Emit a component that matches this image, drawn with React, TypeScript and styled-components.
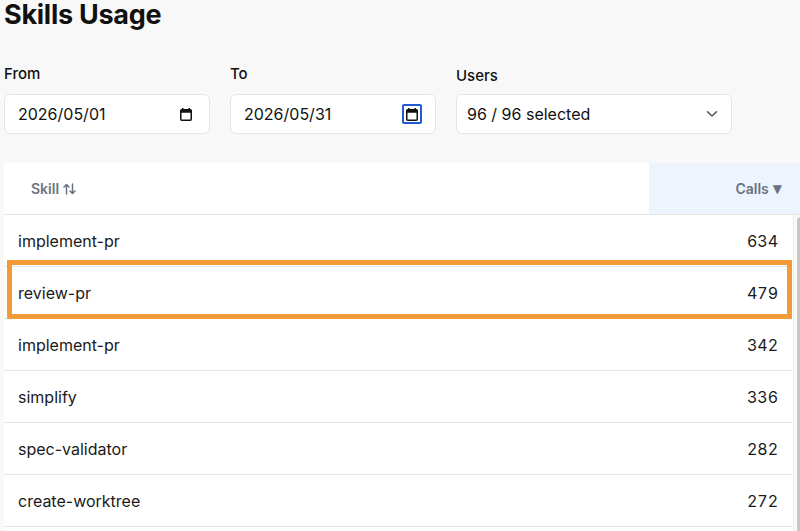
import React from "react";
import styled, { createGlobalStyle } from "styled-components";

const GlobalStyle = createGlobalStyle`
  html, body {
    margin: 0;
    padding: 0;
    background: #f8f8f8;
    overflow: hidden;
  }
  body {
    font-family: Inter, "Noto Sans", "Liberation Sans", sans-serif;
    color: #111111;
  }
  * { box-sizing: border-box; }
`;

const Page = styled.div`
  width: 804px;
  height: 100vh;
  margin-left: 4px;
  display: flex;
  flex-direction: column;
`;

const Title = styled.h1`
  margin: 0;
  font-size: 27px;
  line-height: 30px;
  font-weight: 700;
  letter-spacing: -0.01em;
  color: #111111;
`;

const Filters = styled.div`
  display: flex;
  gap: 20px;
  margin-top: 34px;
`;

const Field = styled.div<{ $width: number }>`
  display: flex;
  flex-direction: column;
  gap: 10px;
  width: ${(p) => p.$width}px;
`;

const Label = styled.div<{ $shift?: number }>`
  font-size: 15px;
  line-height: 20px;
  font-weight: 500;
  color: #111111;
  padding-top: ${(p) => p.$shift ?? 0}px;
  margin-bottom: ${(p) => -(p.$shift ?? 0)}px;
`;

const InputBox = styled.div<{ $padLeft: number; $padRight: number }>`
  height: 40px;
  background: #ffffff;
  border: 1px solid #e4e4e4;
  border-radius: 6px;
  display: flex;
  align-items: center;
  justify-content: space-between;
  padding: 0 ${(p) => p.$padRight}px 0 ${(p) => p.$padLeft}px;
  font-size: 16px;
  color: #111111;
`;

const IconSlot = styled.span<{ $focused?: boolean }>`
  display: inline-flex;
  align-items: center;
  justify-content: center;
  width: 20px;
  height: 20px;
  border-radius: 2px;
  margin-right: -4px;
  box-shadow: ${(p) => (p.$focused ? "inset 0 0 0 2px #1f5ad8" : "none")};
`;

const Table = styled.div`
  margin-top: 29px;
  flex: 1;
  min-height: 0;
  display: flex;
  flex-direction: column;
  background: #ffffff;
`;

const HeaderRow = styled.div`
  display: grid;
  grid-template-columns: 1fr 159px;
  height: 52px;
  border-bottom: 1px solid #e6e6e6;
`;

const HeaderCell = styled.div<{ $align: "left" | "right"; $active?: boolean }>`
  display: flex;
  align-items: center;
  justify-content: ${(p) => (p.$align === "right" ? "flex-end" : "flex-start")};
  gap: 4px;
  padding: ${(p) => (p.$align === "right" ? "0 26px 0 0" : "0 0 0 27px")};
  background: ${(p) => (p.$active ? "#eef4fd" : "#ffffff")};
  font-size: 14px;
  font-weight: 600;
  color: #6b7280;
`;

const SortGlyph = styled.span`
  font-family: "DejaVu Sans", sans-serif;
  font-size: 12px;
  color: #6b7280;
  line-height: 1;
`;

const BodyArea = styled.div`
  flex: 1;
  min-height: 0;
  display: flex;
`;

const RowList = styled.div`
  flex: 1;
  min-width: 0;
  overflow: hidden;
`;

const ScrollTrack = styled.div`
  width: 15px;
  flex: none;
  background: #fafafa;
  border-left: 1px solid #e8e8e8;
  padding: 2px 3px 0 3px;
`;

const ScrollThumb = styled.div`
  height: 120%;
  background: #c6c6c6;
  border-radius: 4px;
`;

const Row = styled.div`
  position: relative;
  display: flex;
  align-items: center;
  justify-content: space-between;
  height: 52px;
  padding: 0 15px 0 14px;
  border-bottom: 1px solid #e6e6e6;
  font-size: 16px;
  color: #1a1a1a;
`;

const Highlight = styled.div`
  position: absolute;
  top: -7px;
  bottom: -1px;
  left: 3px;
  right: 1px;
  border: 5px solid #f29b38;
  pointer-events: none;
`;

const Num = styled.span`
  font-variant-numeric: tabular-nums;
`;

const CalendarIcon = () => (
  <svg width="12" height="14" viewBox="0 0 12 14" fill="none">
    <rect x="0.75" y="2.75" width="10.5" height="10.5" rx="1" stroke="#111" strokeWidth="1.5" />
    <rect x="0.75" y="2.75" width="10.5" height="3" fill="#111" />
    <rect x="2" y="1" width="1.5" height="2" fill="#111" />
    <rect x="8.5" y="1" width="1.5" height="2" fill="#111" />
  </svg>
);

const Chevron = () => (
  <svg width="12" height="8" viewBox="0 0 12 8" fill="none">
    <path d="M1.5 1.75 L6 6 L10.5 1.75" stroke="#555" strokeWidth="1.5" strokeLinecap="round" strokeLinejoin="round" />
  </svg>
);

const SortIcon = () => (
  <svg width="13" height="12" viewBox="0 0 13 12" fill="none">
    <path d="M3.5 11 V1.5 M1 4 L3.5 1.5 L6 4" stroke="#6b7280" strokeWidth="1.5" strokeLinecap="round" strokeLinejoin="round" />
    <path d="M9.5 1 V10.5 M7 8 L9.5 10.5 L12 8" stroke="#6b7280" strokeWidth="1.5" strokeLinecap="round" strokeLinejoin="round" />
  </svg>
);

const rows = [
  { skill: "implement-pr", calls: 634 },
  { skill: "review-pr", calls: 479, highlight: true },
  { skill: "implement-pr", calls: 342 },
  { skill: "simplify", calls: 336 },
  { skill: "spec-validator", calls: 282 },
  { skill: "create-worktree", calls: 272 },
];

export default function App() {
  return (
    <>
      <GlobalStyle />
      <Page>
        <Title>Skills Usage</Title>
        <Filters>
          <Field $width={206}>
            <Label>From</Label>
            <InputBox $padLeft={13} $padRight={17}>
              <span>2026/05/01</span>
              <IconSlot>
                <CalendarIcon />
              </IconSlot>
            </InputBox>
          </Field>
          <Field $width={206}>
            <Label>To</Label>
            <InputBox $padLeft={13} $padRight={17}>
              <span>2026/05/31</span>
              <IconSlot $focused>
                <CalendarIcon />
              </IconSlot>
            </InputBox>
          </Field>
          <Field $width={276}>
            <Label $shift={2}>Users</Label>
            <InputBox $padLeft={10} $padRight={13}>
              <span>96 / 96 selected</span>
              <Chevron />
            </InputBox>
          </Field>
        </Filters>
        <Table>
          <HeaderRow>
            <HeaderCell $align="left">
              Skill <SortIcon />
            </HeaderCell>
            <HeaderCell $align="right" $active>
              Calls <SortGlyph>▼</SortGlyph>
            </HeaderCell>
          </HeaderRow>
          <BodyArea>
            <RowList>
              {rows.map((r, i) => (
                <Row key={i}>
                  <span>{r.skill}</span>
                  <Num>{r.calls}</Num>
                  {r.highlight && <Highlight />}
                </Row>
              ))}
            </RowList>
            <ScrollTrack>
              <ScrollThumb />
            </ScrollTrack>
          </BodyArea>
        </Table>
      </Page>
    </>
  );
}
